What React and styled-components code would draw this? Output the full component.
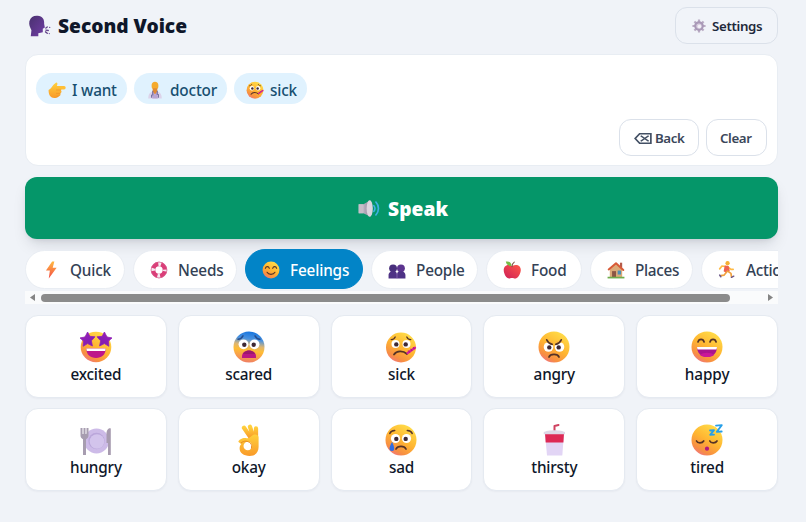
import React, { useState } from "react";
import styled, { createGlobalStyle } from "styled-components";

const GlobalStyle = createGlobalStyle`
	* {
		box-sizing: border-box;
	}

	body {
		margin: 0;
		background: #f0f3f8;
		overflow: hidden;
		font-family: "Noto Sans", "Open Sans", sans-serif;
		color: #0f172a;
	}

	button {
		font-family: inherit;
		cursor: pointer;
	}
`;

const Page = styled.main`
	width: 753px;
	height: 522px;
	margin-left: 25px;
	padding-top: 7px;
`;

const Header = styled.header`
	display: flex;
	justify-content: space-between;
	height: 37px;
	margin-bottom: 10px;
`;

const Title = styled.h1`
	display: flex;
	align-items: center;
	gap: 8px;
	margin: 0;
	padding-left: 3px;
	font-size: 19.2px;
	font-weight: 900;
	line-height: 37px;
	letter-spacing: -0.02px;
	white-space: nowrap;
`;

const Label = styled.span`
	letter-spacing: ${({ $track }) => $track || 0}px;
	white-space: nowrap;
`;

const OutlineButton = styled.button`
	display: flex;
	align-items: center;
	width: ${({ $width }) => $width}px;
	height: 37px;
	padding: ${({ $top }) => $top || 0}px 0 0 ${({ $left }) => $left || 14}px;
	gap: ${({ $gap }) => $gap || 4}px;
	background: ${({ $fill }) => $fill || "white"};
	border: 1px solid #dbe1ea;
	border-radius: 12px;
	color: ${({ $color }) => $color || "#3b475a"};
	font-size: 13.3px;
	font-weight: 600;
`;

const Message = styled.section`
	display: flex;
	flex-direction: column;
	justify-content: space-between;
	height: 112px;
	padding: 19px 10px 9px;
	background: white;
	border: 1px solid #e8edf3;
	border-radius: 13px;
	margin-bottom: 11px;
`;

const Chips = styled.div`
	display: flex;
	gap: 7px;
	margin-top: -1px;
`;

const Chip = styled.span`
	display: flex;
	align-items: center;
	gap: 6px;
	width: ${({ $width }) => $width}px;
	height: 31px;
	padding: 2px 0 0 12px;
	background: #e0f2fe;
	border-radius: 16px;
	color: #174f70;
	font-size: 15.3px;
	font-weight: 500;
`;

const Actions = styled.div`
	display: flex;
	justify-content: flex-end;
	gap: 7px;
`;

const SpeakButton = styled.button`
	display: flex;
	align-items: center;
	gap: 8px;
	width: 100%;
	height: 62px;
	padding: 1px 0 0 333px;
	background: #059669;
	border: 0;
	border-radius: 12px;
	box-shadow: 0 8px 15px -3px rgba(15, 23, 42, 0.13), 0 3px 6px -3px rgba(15, 23, 42, 0.12);
	color: white;
	font-size: 19.2px;
	font-weight: 900;
`;

const Tabs = styled.nav`
	display: flex;
	align-items: center;
	gap: 8px;
	height: 42px;
	margin-top: 9px;
	overflow: hidden;
`;

const Tab = styled.button`
	display: flex;
	flex: none;
	align-items: center;
	gap: 10px;
	width: ${({ $width }) => $width}px;
	height: ${({ $active }) => ($active ? 40 : 39)}px;
	padding: 1px 0 0 16px;
	background: ${({ $active }) => ($active ? "#0284c7" : "white")};
	border: 1px solid ${({ $active }) => ($active ? "#0284c7" : "#e9edf3")};
	border-radius: 20px;
	color: ${({ $active }) => ($active ? "white" : "#334155")};
	font-size: 15.3px;
	font-weight: 500;
`;

const ScrollBar = styled.div`
	display: flex;
	align-items: center;
	justify-content: space-between;
	height: 13px;
	margin-top: 1px;
	padding: 0 5px;
	background: #fafbfc;
`;

const Thumb = styled.div`
	width: 689px;
	height: 8px;
	margin-right: 33px;
	border-radius: 4px;
	background: #8b8b8b;
`;

const Grid = styled.div`
	display: grid;
	grid-template-columns: repeat(5, 1fr);
	gap: 10px 11px;
	margin-top: 11px;
`;

const Card = styled.button`
	display: flex;
	flex-direction: column;
	align-items: center;
	height: 83px;
	padding: 15px 0 0;
	background: white;
	border: 1px solid #e5eaf1;
	border-radius: 13px;
	box-shadow: 0 1px 2px rgba(15, 23, 42, 0.04);
	color: #0f172a;
	font-size: 15.3px;
	font-weight: 500;
	line-height: 23px;
`;

const Drawing = styled.svg`
	display: block;
	flex: none;
	overflow: visible;
`;

const Gradients = () => (
	<svg width="0" height="0" style={{ position: "absolute" }}>
		<defs>
			<linearGradient id="skin" x1=".8" y1="0" x2=".2" y2="1">
				<stop stopColor="#ffe04b" />
				<stop offset=".5" stopColor="#ffb531" />
				<stop offset=".82" stopColor="#f78d44" />
				<stop offset="1" stopColor="#ef718e" />
			</linearGradient>
			<linearGradient id="fear" x1=".55" y1="0" x2=".4" y2="1">
				<stop stopColor="#1675df" />
				<stop offset=".24" stopColor="#4a92df" />
				<stop offset=".44" stopColor="#ddb673" />
				<stop offset=".6" stopColor="#ffbd34" />
				<stop offset="1" stopColor="#ef7e65" />
			</linearGradient>
			<linearGradient id="purple" x1="0" y1="0" x2="1" y2="1">
				<stop stopColor="#49316f" />
				<stop offset="1" stopColor="#713da5" />
			</linearGradient>
			<linearGradient id="hand" x1="0" y1="0" x2="0" y2="1">
				<stop stopColor="#ffd03c" />
				<stop offset="1" stopColor="#f99a29" />
			</linearGradient>
			<linearGradient id="star" x1="0" y1="0" x2="1" y2="1">
				<stop stopColor="#9a20be" />
				<stop offset="1" stopColor="#7b1bab" />
			</linearGradient>
			<linearGradient id="apple" x1="1" y1="0" x2="0" y2="1">
				<stop stopColor="#ff5849" />
				<stop offset="1" stopColor="#ce2058" />
			</linearGradient>
			<linearGradient id="bolt" x1="0" y1="0" x2="0" y2="1">
				<stop stopColor="#ffba42" />
				<stop offset="1" stopColor="#f34a45" />
			</linearGradient>
			<linearGradient id="metal" x1="0" y1="0" x2="1" y2="0">
				<stop stopColor="#d4cbd8" />
				<stop offset="1" stopColor="#91869b" />
			</linearGradient>
		</defs>
	</svg>
);

const Eyes = ({ y = 13, r = 4.4 }) => (
	<>
		<circle cx="10.5" cy={y} r={r} fill="white" />
		<circle cx="21.5" cy={y} r={r} fill="white" />
		<circle cx="11.3" cy={y + 0.4} r="2.2" fill="#3e2935" />
		<circle cx="20.7" cy={y + 0.4} r="2.2" fill="#3e2935" />
	</>
);

const line = (d, width = 1.5, stroke = "#563326") => (
	<path d={d} fill="none" stroke={stroke} strokeWidth={width} strokeLinecap="round" strokeLinejoin="round" />
);

const starPath = "M7 0 9.2 4.3l5.2.5-3.6 4 1 5.2L7 11.6l-4.5 2.7.4-5.2L-.6 5.9l5-.9Z";

const drawings = {
	excited: (
		<>
			<circle cx="16" cy="16" r="15.3" fill="url(#skin)" />
			<g fill="url(#star)" stroke="#8f20b5" strokeWidth="0.8" strokeLinejoin="round">
				<path d={starPath} transform="translate(.6 1)" />
				<path d={starPath} transform="matrix(-1 0 0 1 31.4 1)" />
			</g>
			<path d="M6.3 17.5h19.4c0 6-3.9 9.5-9.7 9.5s-9.7-3.5-9.7-9.5Z" fill="#bd168a" />
			<path d="M6.3 17.5h19.4l-.5 2.6H6.8Z" fill="white" />
		</>
	),
	scared: (
		<>
			<circle cx="16" cy="16" r="15.5" fill="url(#fear)" />
			{line("M5 8.2c2.4-.2 4-1.5 5-3.4M27 8.2c-2.4-.2-4-1.5-5-3.4", 1.4, "#264b8c")}
			<Eyes y={13.3} r={4.9} />
			<path d="M9 27v-1.5c0-3.7 3-6 7-6s7 2.3 7 6V27Z" fill="#ba1784" />
			<path d="M10 23c1-2.2 3.2-3.5 6-3.5s5 1.3 6 3.5Z" fill="#9c186f" />
		</>
	),
	sick: (
		<>
			<circle cx="16" cy="16.5" r="15" fill="url(#skin)" />
			<Eyes y={13} r={4} />
			{line("M6.2 8.6c2 0 3.3-1 4-2.6M25.8 8.6c-2 0-3.3-1-4-2.6", 1.3)}
			{line("M9 23.6c2.6-4 9-4.2 13-.6", 1.8)}
			{line("m22.6 22 7.4-5.2", 2.3, "#d81e9c")}
			{line("m23.5 19.8 1 1.5m1.4-3.2 1 1.5m1.4-3.2 1 1.5", 0.9, "#a41672")}
		</>
	),
	angry: (
		<>
			<circle cx="16" cy="16" r="15.5" fill="url(#skin)" />
			<Eyes y={16} r={4.8} />
			<path d="M6 10h8l1.2 4.5Zm20 0h-8l-1.2 4.5Z" fill="#ffb93a" />
			{line("M8.7 8.8c1 2.7 3 4 5.5 4.5M23.3 8.8c-1 2.7-3 4-5.5 4.5", 1.7)}
			{line("M11 26c1.3-3.6 8.7-3.6 10 0", 1.8)}
		</>
	),
	happy: (
		<>
			<circle cx="16" cy="16" r="15.5" fill="url(#skin)" />
			{line("M7 11c.8-3.6 5.3-3.6 6.1 0M19 11c.8-3.6 5.3-3.6 6.1 0", 1.7)}
			<path d="M6 16h20c0 6-4 10-10 10S6 22 6 16Z" fill="#a9148e" />
			<path d="M6 16h20l-.5 2.5h-19Z" fill="white" />
			<path d="M9 24c3-3 11-3 14 0-3.3 2.7-10.7 2.7-14 0Z" fill="#c9189a" />
		</>
	),
	hungry: (
		<>
			<circle cx="16.5" cy="17" r="12.5" fill="#cdbbe8" />
			<circle cx="16.5" cy="17" r="8.2" fill="#baa6da" />
			<circle cx="17" cy="17.5" r="7.3" fill="#d3c4ec" />
			<path d="M.5 4v7.5c0 2 1 3 2.5 3.7V31h3V15.2c1.5-.7 2.5-1.7 2.5-3.7V4h-2v6h-1V4h-2v6h-1V4Z" fill="#a79db0" />
			<path d="M30.8 4.5V31H28V19h-1.5v-9c0-3.5 1.8-6.5 4.3-5.5Z" fill="#a79baf" />
		</>
	),
	okay: (
		<>
			{line("M18 14 11 3.8M20 12 17 2.8M23 14V4.5", 4.3, "url(#hand)")}
			<path d="M20 11c2.4-1 5.6-.5 5.6 3v9c0 5-3 9-9 9-6 0-10-3.3-10-7.4 0-2 .5-3.5 1.7-4.7L5.5 18c-.7-2 5-5 8.2-3.8C16 15 18 12 20 11Z" fill="url(#hand)" />
			<circle cx="14.8" cy="22" r="4.3" fill="white" />
			{line("M8.2 18.8c3.2-2.5 6.5-2 9.2.4 1.4 1.4 1.5 3.3 1 5", 1, "#e88c22")}
		</>
	),
	sad: (
		<>
			<circle cx="16" cy="16" r="15.5" fill="url(#skin)" />
			<Eyes y={14.5} r={4.6} />
			{line("M4.8 9.5c.7-2 2.4-2.9 4.9-3M27.2 9.5c-.7-2-2.4-2.9-4.9-3", 1.5)}
			{line("M11 25c1.7-3.6 8.3-3.6 10 0", 1.7)}
			<path d="M7.1 18c2.3 4.4 3.2 9 0 9-4 0-2.7-4.7 0-9Z" fill="#316ce0" />
		</>
	),
	thirsty: (
		<>
			{line("M16.5 7V2l4-1", 2, "#cf4260")}
			<path d="M7 9h19l-1.7 22.5H9Z" fill="#e2d5f5" />
			<path d="M7 9h19l-.6 9.5H7.7Z" fill="#dd2955" />
			<path d="M5.7 8.2C9 5.5 23.6 5.5 27 8.2v2H5.7Z" fill="#ded8e7" />
		</>
	),
	tired: (
		<>
			<circle cx="16" cy="16" r="15.5" fill="url(#skin)" />
			{line("M5.5 17c1 2.4 5.8 2.4 7.2 0M18.8 17c1 2.4 5.8 2.4 7.2 0", 1.7)}
			<circle cx="16" cy="24.7" r="2.1" fill="#b4177c" />
			{line("m25 1.6 5.8-.5-5 6.7 4.9-.3M19 6.5l4-.4-3.8 4.8 3.8-.3", 1.8, "#279fe8")}
		</>
	),
	voice: (
		<>
			<path d="M2 9C4 3 8 .5 14 1c7 .5 10 5 9.5 12l1 5-3 2v5l-6.5 1.5V31H4l1-9C3 18 1 14 2 9Z" fill="url(#purple)" />
			{line("m26 19 2-1.5m-2 4.5 3.5.5m-4 2 2.5 2", 2, "#64468b")}
			<circle cx="31.5" cy="18" r="1" fill="#7352a0" />
			<circle cx="31" cy="27" r="1" fill="#7352a0" />
		</>
	),
	point: (
		<>
			{line("M13 12h15.5", 5.8, "#ffbf36")}
			<path d="M1 16C7 13 8 7 14 3c4-1 3 5 1 7h6c5 2 3 5 2 6 2 3 1 5-1 6 1 3-1 5-3 5-2 3-5 3-8 3C5 30 1 26 1 16Z" fill="url(#hand)" />
			{line("M15 16h7m-7 6h6m-5 5h3", 1, "#e98c25")}
		</>
	),
	doctor: (
		<>
			<path d="M4 31c0-9 4-13 12-13s12 4 12 13Z" fill="#dcd3ea" />
			<path d="M10 8c-1-9 13-9 12 0 0 2 0 5-2 6v6h-8v-6c-2-1-2-4-2-6Z" fill="#f4aa2c" />
			<path d="M12 13h8l-1 8-3 3-3-3Z" fill="#e08a35" />
			<path d="m12 19 4 5 4-5 1 12H11Z" fill="#b9a6d2" />
			{line("M12 18v7m8-7v6M10 25v4m12-5v5", 1.8, "#6b6796")}
		</>
	),
	gear: (
		<>
			<path d="M16 1v30M1 16h30M5.5 5.5l21 21M26.5 5.5l-21 21" stroke="#b9abc3" strokeWidth="5" />
			<circle cx="16" cy="16" r="8.5" fill="none" stroke="#a999b7" strokeWidth="5" />
			<circle cx="16" cy="16" r="6" fill="#d9cfe0" />
			<circle cx="17" cy="17" r="4" fill="#f3f1f7" />
		</>
	),
	speaker: (
		<>
			<path d="M1 9h7L18 2v28L8 24H1Z" fill="url(#metal)" />
			<path d="M1 9h7v15H1Z" fill="#c7bdc9" />
			<ellipse cx="17" cy="16" rx="4.5" ry="14" fill="#ddd5df" />
			{line("M23 11c2 3 2 7 0 10m3-16c5 6 5 16 0 22", 2.4, "#3fb0e4")}
		</>
	),
	bolt: <path d="M18 1 7 17h7l-2 14 14-19h-7l3-11Z" fill="url(#bolt)" />,
	ring: (
		<>
			<circle cx="16" cy="16" r="10.5" fill="none" stroke="#da3e78" strokeWidth="8" />
			<circle cx="16" cy="16" r="10.5" fill="none" stroke="#f4e9ef" strokeWidth="8" strokeDasharray="5 11.493" strokeDashoffset="2.5" />
			<circle cx="16" cy="16" r="14" fill="none" stroke="#d65f8e" strokeWidth="1.2" />
		</>
	),
	smile: (
		<>
			<circle cx="16" cy="16" r="15" fill="url(#skin)" />
			{line("M6 13c1-4 6-4 7 0m6 0c1-4 6-4 7 0", 2)}
			{line("M9 20c2.5 5 11.5 5 14 0", 2)}
		</>
	),
	people: (
		<>
			<circle cx="9" cy="13" r="7" fill="#49307d" />
			<circle cx="23" cy="13" r="7" fill="#5c348f" />
			<path d="M1 31v-6c0-5 4-7 8-7 5 0 7 2 7 6 0-4 2-6 7-6 4 0 8 2 8 7v6Z" fill="#4e3285" />
			{line("M16 23v7", 1.2, "#9872c2")}
		</>
	),
	food: (
		<>
			<path d="M16 9C6 3-1 11 2 21c2 7 6 11 10 10 3-1 5-1 8 0 5 1 9-4 11-11C34 10 26 4 16 9Z" fill="url(#apple)" />
			<path d="M15 9C9 9 6 6 5 1c7-1 10 2 10 8Z" fill="#75bd46" />
			{line("M16 10c0-4 1-6 4-8", 2, "#82564a")}
		</>
	),
	house: (
		<>
			<path d="M23 3h4v9h-4Z" fill="#b45b4b" />
			<path d="M5 13 16 4l11 10v15H5Z" fill="#dcaa78" />
			{line("M3 15 16 4l13 12", 3.5, "#d85a37")}
			<path d="M9 18h7v11H9Z" fill="#8b5545" />
			<path d="M19 17h6v7h-6Z" fill="#4c8fb5" />
			<path d="M1 28h30v3H1Z" fill="#6ead4c" />
		</>
	),
	run: (
		<>
			<circle cx="17" cy="4" r="3.8" fill="#f5af32" />
			{line("m14 10-7-1-4 5m15-3 5 4h4", 2.9, "#ffba45")}
			<path d="m12 8 7 1 2 9-7 3-4-3Z" fill="#ed6151" />
			{line("m17 18 6 4 1 6m-9-8-4 5-6 1", 3, "#f0a13d")}
			{line("m24 29 4-2M5 28l-2-3", 2.7, "#6c5889")}
		</>
	),
	erase: (
		<>
			<path d="M2 16 10 6h20v20H10Z" fill="none" stroke="#435064" strokeWidth="3" />
			<path d="m12 10 14 12m0-12L12 22" stroke="#435064" strokeWidth="3" />
		</>
	),
};

const Emoji = ({ name, size = 18, height }) => (
	<Drawing width={size} height={height || size} viewBox="0 0 32 32" preserveAspectRatio={height ? "none" : undefined}>
		{drawings[name]}
	</Drawing>
);

const words = [
	{ icon: "point", text: "I want", width: 91, track: -0.2 },
	{ icon: "doctor", text: "doctor", width: 93, track: -0.15 },
	{ icon: "sick", text: "sick", width: 73, track: -0.2 },
];

const categories = [
	{ icon: "bolt", text: "Quick", width: 100, track: -0.15 },
	{ icon: "ring", text: "Needs", width: 104, track: -0.15 },
	{ icon: "smile", text: "Feelings", width: 118, track: -0.15 },
	{ icon: "people", text: "People", width: 107, track: -0.2 },
	{ icon: "food", text: "Food", width: 96, track: -0.15 },
	{ icon: "house", text: "Places", width: 103, track: -0.3 },
	{ icon: "run", text: "Actions", width: 115, track: -0.3 },
];

const feelings = [
	{ text: "excited", track: -0.2 },
	{ text: "scared", track: -0.2 },
	{ text: "sick", track: -0.2 },
	{ text: "angry", track: -0.2 },
	{ text: "happy", track: -0.1 },
	{ text: "hungry", track: -0.15 },
	{ text: "okay", track: -0.15 },
	{ text: "sad", track: -0.2 },
	{ text: "thirsty", track: -0.2 },
	{ text: "tired", track: -0.1 },
];

const App = () => {
	const [active, setActive] = useState("Feelings");
	const [message, setMessage] = useState(words);

	return (
		<Page>
			<GlobalStyle />
			<Gradients />
			<Header>
				<Title>
					<Emoji name="voice" size={22} />
					Second Voice
				</Title>
				<OutlineButton $width={103} $left={16} $gap={6} $fill="#f1f4f9" $color="#1e293b">
					<Emoji name="gear" size={14} />
					<Label $track={-0.35}>Settings</Label>
				</OutlineButton>
			</Header>

			<Message>
				<Chips>
					{message.map((word, key) => (
						<Chip key={`chip-${key}`} $width={word.width}>
							<Emoji name={word.icon} />
							<Label $track={word.track}>{word.text}</Label>
						</Chip>
					))}
				</Chips>
				<Actions>
					<OutlineButton $width={80} $top={1} $gap={3} onClick={() => setMessage(message.slice(0, -1))}>
						<Emoji name="erase" size={18} height={15} />
						<Label $track={-0.4}>Back</Label>
					</OutlineButton>
					<OutlineButton $width={61} $top={1} $left={13} onClick={() => setMessage([])}>
						<Label $track={-0.4}>Clear</Label>
					</OutlineButton>
				</Actions>
			</Message>

			<SpeakButton>
				<Emoji name="speaker" size={22} height={19} />
				<Label $track={0.1}>Speak</Label>
			</SpeakButton>

			<Tabs>
				{categories.map((category) => (
					<Tab
						key={category.text}
						$width={category.width}
						$active={active === category.text}
						onClick={() => setActive(category.text)}
					>
						<Emoji name={category.icon} />
						<Label $track={category.track}>{category.text}</Label>
					</Tab>
				))}
			</Tabs>
			<ScrollBar>
				<Drawing width="5" height="7" viewBox="0 0 5 7">
					<path d="M5 0v7L0 3.5Z" fill="#858585" />
				</Drawing>
				<Thumb />
				<Drawing width="5" height="7" viewBox="0 0 5 7">
					<path d="M0 0v7l5-3.5Z" fill="#858585" />
				</Drawing>
			</ScrollBar>

			<Grid>
				{feelings.map((feeling) => (
					<Card key={feeling.text} onClick={() => setMessage([...message, { icon: feeling.text, text: feeling.text }])}>
						<Emoji name={feeling.text} size={32} />
						<Label $track={feeling.track}>{feeling.text}</Label>
					</Card>
				))}
			</Grid>
		</Page>
	);
};

export default App;
